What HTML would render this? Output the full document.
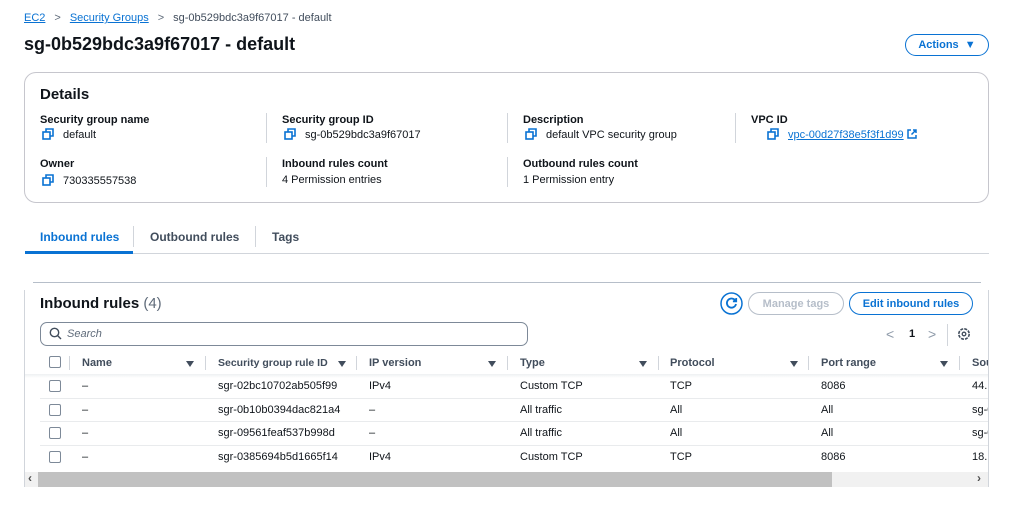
<!DOCTYPE html>
<html><head><meta charset="utf-8">
<style>
*{margin:0;padding:0;box-sizing:border-box}
body{width:1024px;height:507px;background:#fff;font-family:"Liberation Sans",Arial,sans-serif;color:#0f141a;position:relative;overflow:hidden;font-size:11px}
.a{position:absolute;white-space:nowrap}
.lnk{color:#0972d3;text-decoration:underline}
.b{font-weight:bold}
.cp{display:inline-block;width:12px;height:12px;vertical-align:-2px;margin-right:9px}
.vd{position:absolute;width:1px;background:#d1d5db}
.btn{position:absolute;border:1.5px solid #0972d3;border-radius:14px;color:#0972d3;font-weight:bold;font-size:11px;display:flex;align-items:center;justify-content:center}
.cb{position:absolute;width:12px;height:12px;border:1.5px solid #7d8998;border-radius:2px}
.si{position:absolute;width:0;height:0;border-left:4px solid transparent;border-right:4px solid transparent;border-top:6px solid #414d5c}
.hd{font-weight:bold;color:#414d5c}
.rl{position:absolute;left:40px;width:948px;height:1px;background:#e9ebed}
</style></head><body>
<svg width="0" height="0" style="position:absolute"><defs><symbol id="cp" viewBox="0 0 12 12"><rect x="1" y="4" width="7" height="7" stroke="#0972d3" stroke-width="1.6" fill="none"/><path d="M4 3.5V1h7v7H8.5" stroke="#0972d3" stroke-width="1.6" fill="none"/></symbol></defs></svg>
<div class="a" style="left:24px;top:12px"><span class="lnk">EC2</span><span style="color:#5f6b7a;margin:0 9px">&gt;</span><span class="lnk">Security Groups</span><span style="color:#5f6b7a;margin:0 9px">&gt;</span><span style="color:#414d5c">sg-0b529bdc3a9f67017 - default</span></div>
<div class="a b" style="left:24px;top:34px;font-size:18px">sg-0b529bdc3a9f67017 - default</div>
<div class="btn" style="left:905px;top:34px;width:84px;height:22px">Actions&nbsp;&nbsp;▼</div>

<div class="a" style="left:24px;top:72px;width:965px;height:131px;border:1px solid #c6c6cd;border-radius:12px"></div>
<div class="a b" style="left:40px;top:86px;font-size:15px">Details</div>
<div class="a b" style="left:40px;top:114px">Security group name</div>
<div class="a" style="left:42px;top:128px"><svg class="cp"><use href="#cp"/></svg>default</div>
<div class="a b" style="left:40px;top:158px">Owner</div>
<div class="a" style="left:42px;top:174px"><svg class="cp"><use href="#cp"/></svg>730335557538</div>
<div class="vd" style="left:266px;top:113px;height:30px"></div>
<div class="vd" style="left:266px;top:157px;height:30px"></div>
<div class="a b" style="left:282px;top:114px">Security group ID</div>
<div class="a" style="left:284px;top:128px"><svg class="cp"><use href="#cp"/></svg>sg-0b529bdc3a9f67017</div>
<div class="a b" style="left:282px;top:158px">Inbound rules count</div>
<div class="a" style="left:282px;top:174px">4 Permission entries</div>
<div class="vd" style="left:507px;top:113px;height:30px"></div>
<div class="vd" style="left:507px;top:157px;height:30px"></div>
<div class="a b" style="left:523px;top:114px">Description</div>
<div class="a" style="left:525px;top:128px"><svg class="cp"><use href="#cp"/></svg>default VPC security group</div>
<div class="a b" style="left:523px;top:158px">Outbound rules count</div>
<div class="a" style="left:523px;top:174px">1 Permission entry</div>
<div class="vd" style="left:735px;top:113px;height:30px"></div>
<div class="a b" style="left:751px;top:114px">VPC ID</div>
<div class="a" style="left:767px;top:128px"><svg class="cp"><use href="#cp"/></svg><span class="lnk">vpc-00d27f38e5f3f1d99</span> <svg width="10" height="10" viewBox="0 0 10 10" style="vertical-align:-1px"><path d="M4 1H1v8h8V6M6 1h3v3M9 1L4.5 5.5" stroke="#0972d3" stroke-width="1.5" fill="none"/></svg></div>

<div class="a b" style="left:40px;top:230px;font-size:12px;color:#0972d3">Inbound rules</div>
<div class="a b" style="left:150px;top:230px;font-size:12px;color:#414d5c">Outbound rules</div>
<div class="a b" style="left:272px;top:230px;font-size:12px;color:#414d5c">Tags</div>
<div class="vd" style="left:133px;top:226px;height:21px"></div>
<div class="vd" style="left:255px;top:226px;height:21px"></div>
<div class="a" style="left:25px;top:253px;width:964px;height:1px;background:#d1d5db"></div>
<div class="a" style="left:25px;top:251px;width:108px;height:3px;background:#0972d3"></div>

<div class="a" style="left:33px;top:282px;width:948px;height:1px;background:#b6bec9"></div>
<div class="a" style="left:24px;top:290px;width:1px;height:197px;background:#d1d5db"></div>
<div class="a" style="left:988px;top:290px;width:1px;height:197px;background:#d1d5db"></div>
<div class="a b" style="left:40px;top:295px;font-size:15px">Inbound rules <span style="font-weight:normal;color:#5f6b7a">(4)</span></div>
<div class="a" style="left:40px;top:322px;width:488px;height:24px;border:1px solid #7d8998;border-radius:7px"></div>
<svg class="a" style="left:49px;top:327px" width="13" height="13" viewBox="0 0 13 13"><circle cx="5.5" cy="5.5" r="4.2" stroke="#414d5c" stroke-width="1.4" fill="none"/><path d="M8.5 8.5L12 12" stroke="#414d5c" stroke-width="1.4"/></svg>
<div class="a" style="left:67px;top:328px;font-style:italic;color:#5f6b7a">Search</div>
<svg class="a" style="left:720px;top:292px" width="23" height="23" viewBox="0 0 23 23"><circle cx="11.5" cy="11.5" r="10.5" stroke="#0972d3" stroke-width="1.5" fill="none"/><path d="M15.3 8.5A4.6 4.6 0 1 0 16 12" stroke="#0972d3" stroke-width="1.8" fill="none"/><path d="M16.2 6v3.3h-3.3" stroke="#0972d3" stroke-width="1.8" fill="none"/></svg>
<div class="btn" style="left:748px;top:292px;width:96px;height:23px;border-color:#b6bec9;color:#b6bec9">Manage tags</div>
<div class="btn" style="left:849px;top:292px;width:124px;height:23px">Edit inbound rules</div>
<div class="a" style="left:886px;top:326px;color:#8d99a8;font-size:14px">&lt;</div>
<div class="a b" style="left:909px;top:328px">1</div>
<div class="a" style="left:928px;top:326px;color:#8d99a8;font-size:14px">&gt;</div>
<div class="vd" style="left:947px;top:324px;height:22px"></div>
<svg class="a" style="left:957px;top:327px" width="14" height="14" viewBox="0 0 14 14"><circle cx="7" cy="7" r="5.2" stroke="#414d5c" stroke-width="1.6" fill="none" stroke-dasharray="3 1.1"/><circle cx="7" cy="7" r="1.8" stroke="#414d5c" stroke-width="1.3" fill="none"/></svg>

<div class="cb" style="left:49px;top:356px"></div>
<div class="vd" style="left:69px;top:356px;height:14px"></div>
<div class="a hd" style="left:82px;top:357px">Name</div><div class="si" style="left:186px;top:361px"></div><div class="vd" style="left:205px;top:356px;height:14px"></div>
<div class="a hd" style="left:218px;top:357px;font-size:10.5px">Security group rule ID</div><div class="si" style="left:338px;top:361px"></div><div class="vd" style="left:356px;top:356px;height:14px"></div>
<div class="a hd" style="left:369px;top:357px">IP version</div><div class="si" style="left:488px;top:361px"></div><div class="vd" style="left:507px;top:356px;height:14px"></div>
<div class="a hd" style="left:520px;top:357px">Type</div><div class="si" style="left:639px;top:361px"></div><div class="vd" style="left:658px;top:356px;height:14px"></div>
<div class="a hd" style="left:670px;top:357px">Protocol</div><div class="si" style="left:790px;top:361px"></div><div class="vd" style="left:808px;top:356px;height:14px"></div>
<div class="a hd" style="left:821px;top:357px">Port range</div><div class="si" style="left:940px;top:361px"></div><div class="vd" style="left:959px;top:356px;height:14px"></div>
<div class="a hd" style="left:972px;top:357px;width:16px;overflow:hidden">Source</div>
<div class="a" style="left:25px;top:374px;width:963px;height:4px;background:linear-gradient(#eef0f2,#fff)"></div>

<div class="rl" style="top:398px"></div><div class="rl" style="top:421px"></div><div class="rl" style="top:445px"></div>

<div class="cb" style="left:49px;top:380px"></div><div class="a" style="left:82px;top:380px">–</div><div class="a" style="left:218px;top:380px">sgr-02bc10702ab505f99</div><div class="a" style="left:369px;top:380px">IPv4</div><div class="a" style="left:520px;top:380px">Custom TCP</div><div class="a" style="left:670px;top:380px">TCP</div><div class="a" style="left:821px;top:380px">8086</div><div class="a" style="left:972px;top:380px;width:16px;overflow:hidden">44.1</div>
<div class="cb" style="left:49px;top:404px"></div><div class="a" style="left:82px;top:404px">–</div><div class="a" style="left:218px;top:404px">sgr-0b10b0394dac821a4</div><div class="a" style="left:369px;top:404px">–</div><div class="a" style="left:520px;top:404px">All traffic</div><div class="a" style="left:670px;top:404px">All</div><div class="a" style="left:821px;top:404px">All</div><div class="a" style="left:972px;top:404px;width:16px;overflow:hidden">sg-0</div>
<div class="cb" style="left:49px;top:427px"></div><div class="a" style="left:82px;top:427px">–</div><div class="a" style="left:218px;top:427px">sgr-09561feaf537b998d</div><div class="a" style="left:369px;top:427px">–</div><div class="a" style="left:520px;top:427px">All traffic</div><div class="a" style="left:670px;top:427px">All</div><div class="a" style="left:821px;top:427px">All</div><div class="a" style="left:972px;top:427px;width:16px;overflow:hidden">sg-0</div>
<div class="cb" style="left:49px;top:451px"></div><div class="a" style="left:82px;top:451px">–</div><div class="a" style="left:218px;top:451px">sgr-0385694b5d1665f14</div><div class="a" style="left:369px;top:451px">IPv4</div><div class="a" style="left:520px;top:451px">Custom TCP</div><div class="a" style="left:670px;top:451px">TCP</div><div class="a" style="left:821px;top:451px">8086</div><div class="a" style="left:972px;top:451px;width:16px;overflow:hidden">18.1</div>

<div class="a" style="left:25px;top:472px;width:963px;height:15px;background:#f1f1f1"></div>
<div class="a" style="left:38px;top:472px;width:794px;height:15px;background:#c1c1c1"></div>
<div class="a" style="left:28px;top:471px;color:#505050;font-size:12px;font-weight:bold">‹</div>
<div class="a" style="left:977px;top:471px;color:#505050;font-size:12px;font-weight:bold">›</div>
</body></html>
